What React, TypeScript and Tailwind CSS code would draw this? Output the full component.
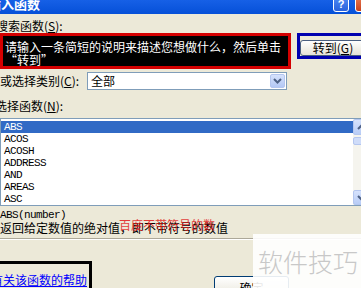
export default function App() {
  const fns = ["ABS", "ACOS", "ACOSH", "ADDRESS", "AND", "AREAS", "ASC"];

  return (
    <div className="relative w-[361px] h-[288px] overflow-hidden bg-[#ece9d8] text-[12px] text-black font-['Noto_Sans_CJK_SC',sans-serif]">
      {/* title bar */}
      <div className="h-[14px] flex items-start justify-between overflow-hidden bg-linear-to-b from-[#1660e6] to-[#0550d8]">
        <span className="-ml-[12px] -mt-[5px] text-[13px] leading-[18px] font-bold text-white whitespace-nowrap">插入函数</span>
        <div className="flex items-start -mr-[10px] shrink-0">
          <div className="-mt-[4px] w-[16px] h-[16px] rounded-[3px] border border-white bg-linear-to-b from-[#4f8bf5] to-[#2a62dc] flex items-end justify-center text-white text-[11px] leading-[13px] font-bold font-['Liberation_Sans',sans-serif]">?</div>
          <div className="-mt-[4px] ml-[6px] w-[16px] h-[16px] rounded-[3px] border border-white bg-linear-to-b from-[#e8774f] to-[#c8421e]"></div>
        </div>
      </div>

      <div className="pt-[5px]">
        <div className="h-[14px] leading-[14px] -ml-[4px] whitespace-nowrap">
          搜索函数(<span className="underline">S</span>):
        </div>

        {/* search row */}
        <div className="flex items-start">
          <div className="shrink-0 w-[291px] h-[36px] border-[3px] border-[#d40000] bg-black text-white leading-[13px] pl-[2px] pt-[4px] whitespace-nowrap overflow-hidden">
            请输入一条简短的说明来描述您想做什么，然后单击
            <br />
            “转到”
          </div>
          <div className="shrink-0 ml-[6px] w-[80px] h-[26px] border-[3px] border-[#0000b0] pt-[3px]">
            <button className="w-[66px] h-[16px] rounded-[3px] border border-[#4a5f80] bg-linear-to-b from-white to-[#e6e3d6] text-[12px] leading-[14px]">
              转到(<span className="underline">G</span>)
            </button>
          </div>
        </div>

        {/* category row */}
        <div className="mt-[3px] flex items-center h-[18px]">
          <span className="w-[87px] whitespace-nowrap">
            或选择类别(<span className="underline">C</span>):
          </span>
          <div className="w-[200px] h-[18px] border border-[#7f9db9] bg-white flex items-center justify-between pl-[3px] pr-[1px]">
            <span className="leading-[14px]">全部</span>
            <div className="w-[15px] h-[14px] rounded-[2px] bg-linear-to-b from-[#d6e2fc] to-[#b3c8f5] border border-[#b4c6ef] flex items-center justify-center">
              <svg width="9" height="6" viewBox="0 0 9 6">
                <path d="M1 1 L4.5 4.5 L8 1" fill="none" stroke="#4d6185" strokeWidth="2" />
              </svg>
            </div>
          </div>
        </div>

        <div className="mt-[9px] h-[14px] leading-[14px] -ml-[5px] whitespace-nowrap">
          选择函数(<span className="underline">N</span>):
        </div>

        {/* function list */}
        <div className="mt-[5px] w-[371px] h-[88px] border border-[#7f9db9] bg-white flex">
          <div className="w-[352px] pt-[2px] font-['Liberation_Mono',monospace] text-[11px] tracking-[-0.6px]">
            {fns.map((f, i) => (
              <div
                key={f}
                className={`h-[12px] leading-[12px] pl-[3px] ${i === 0 ? "bg-[#316ac5] text-white" : ""}`}
              >
                {f}
              </div>
            ))}
          </div>
          <div className="w-[17px] bg-[#f5f4ee] flex flex-col">
            <div className="h-[16px] rounded-[2px] border border-[#b4c6ef] bg-linear-to-b from-[#d6e2fc] to-[#b8ccf6] flex items-center justify-center">
              <svg width="9" height="6" viewBox="0 0 9 6">
                <path d="M1 5 L4.5 1.5 L8 5" fill="none" stroke="#4d6185" strokeWidth="2" />
              </svg>
            </div>
            <div className="mt-[2px] h-[8px] rounded-[2px] border border-[#b4c6ef] bg-[#cfdcf9]"></div>
            <div className="flex-1"></div>
            <div className="h-[15px] rounded-[2px] border border-[#b4c6ef] bg-linear-to-b from-[#d6e2fc] to-[#b8ccf6] flex items-center justify-center">
              <svg width="9" height="6" viewBox="0 0 9 6">
                <path d="M1 1 L4.5 4.5 L8 1" fill="none" stroke="#4d6185" strokeWidth="2" />
              </svg>
            </div>
          </div>
        </div>

        {/* description */}
        <div className="mt-[3px] h-[12px] leading-[12px] font-['Liberation_Mono',monospace] text-[11px] tracking-[-0.6px]">
          ABS(number)
        </div>
        <div className="h-[13px] leading-[13px] whitespace-nowrap">
          返回给定数值的绝对值
          <span className="relative">
            ，即不带符号的数值
            <span className="absolute left-[-1px] top-[-1px] text-[#e01010] opacity-80">百度不带符号的数</span>
          </span>
        </div>

        <div className="mt-[4px] border-t border-[#aca899]">
          <div className="border-t border-white"></div>
        </div>

        {/* bottom */}
        <div className="mt-[21px] flex items-start">
          <div className="shrink-0 -ml-[4px] w-[96px] h-[34px] border-[3px] border-black pt-[9px] whitespace-nowrap overflow-hidden">
            <span className="block -ml-[8px] leading-[13px] text-[#0000ff] underline">有关该函数的帮助</span>
          </div>
          <button className="shrink-0 mt-[15px] ml-[122px] w-[75px] h-[23px] rounded-[3px] border border-[#003c74] bg-linear-to-b from-white to-[#e6e3d6] text-[12px] leading-[20px]">
            确定
          </button>
        </div>
      </div>

      {/* watermark */}
      <div className="absolute left-[253px] top-[234px] w-[108px] h-[54px] bg-white/90 flex items-center pl-[5px]">
        <span className="text-[25px] leading-none font-light text-[#c8c8c8] whitespace-nowrap">软件技巧</span>
      </div>
    </div>
  );
}
